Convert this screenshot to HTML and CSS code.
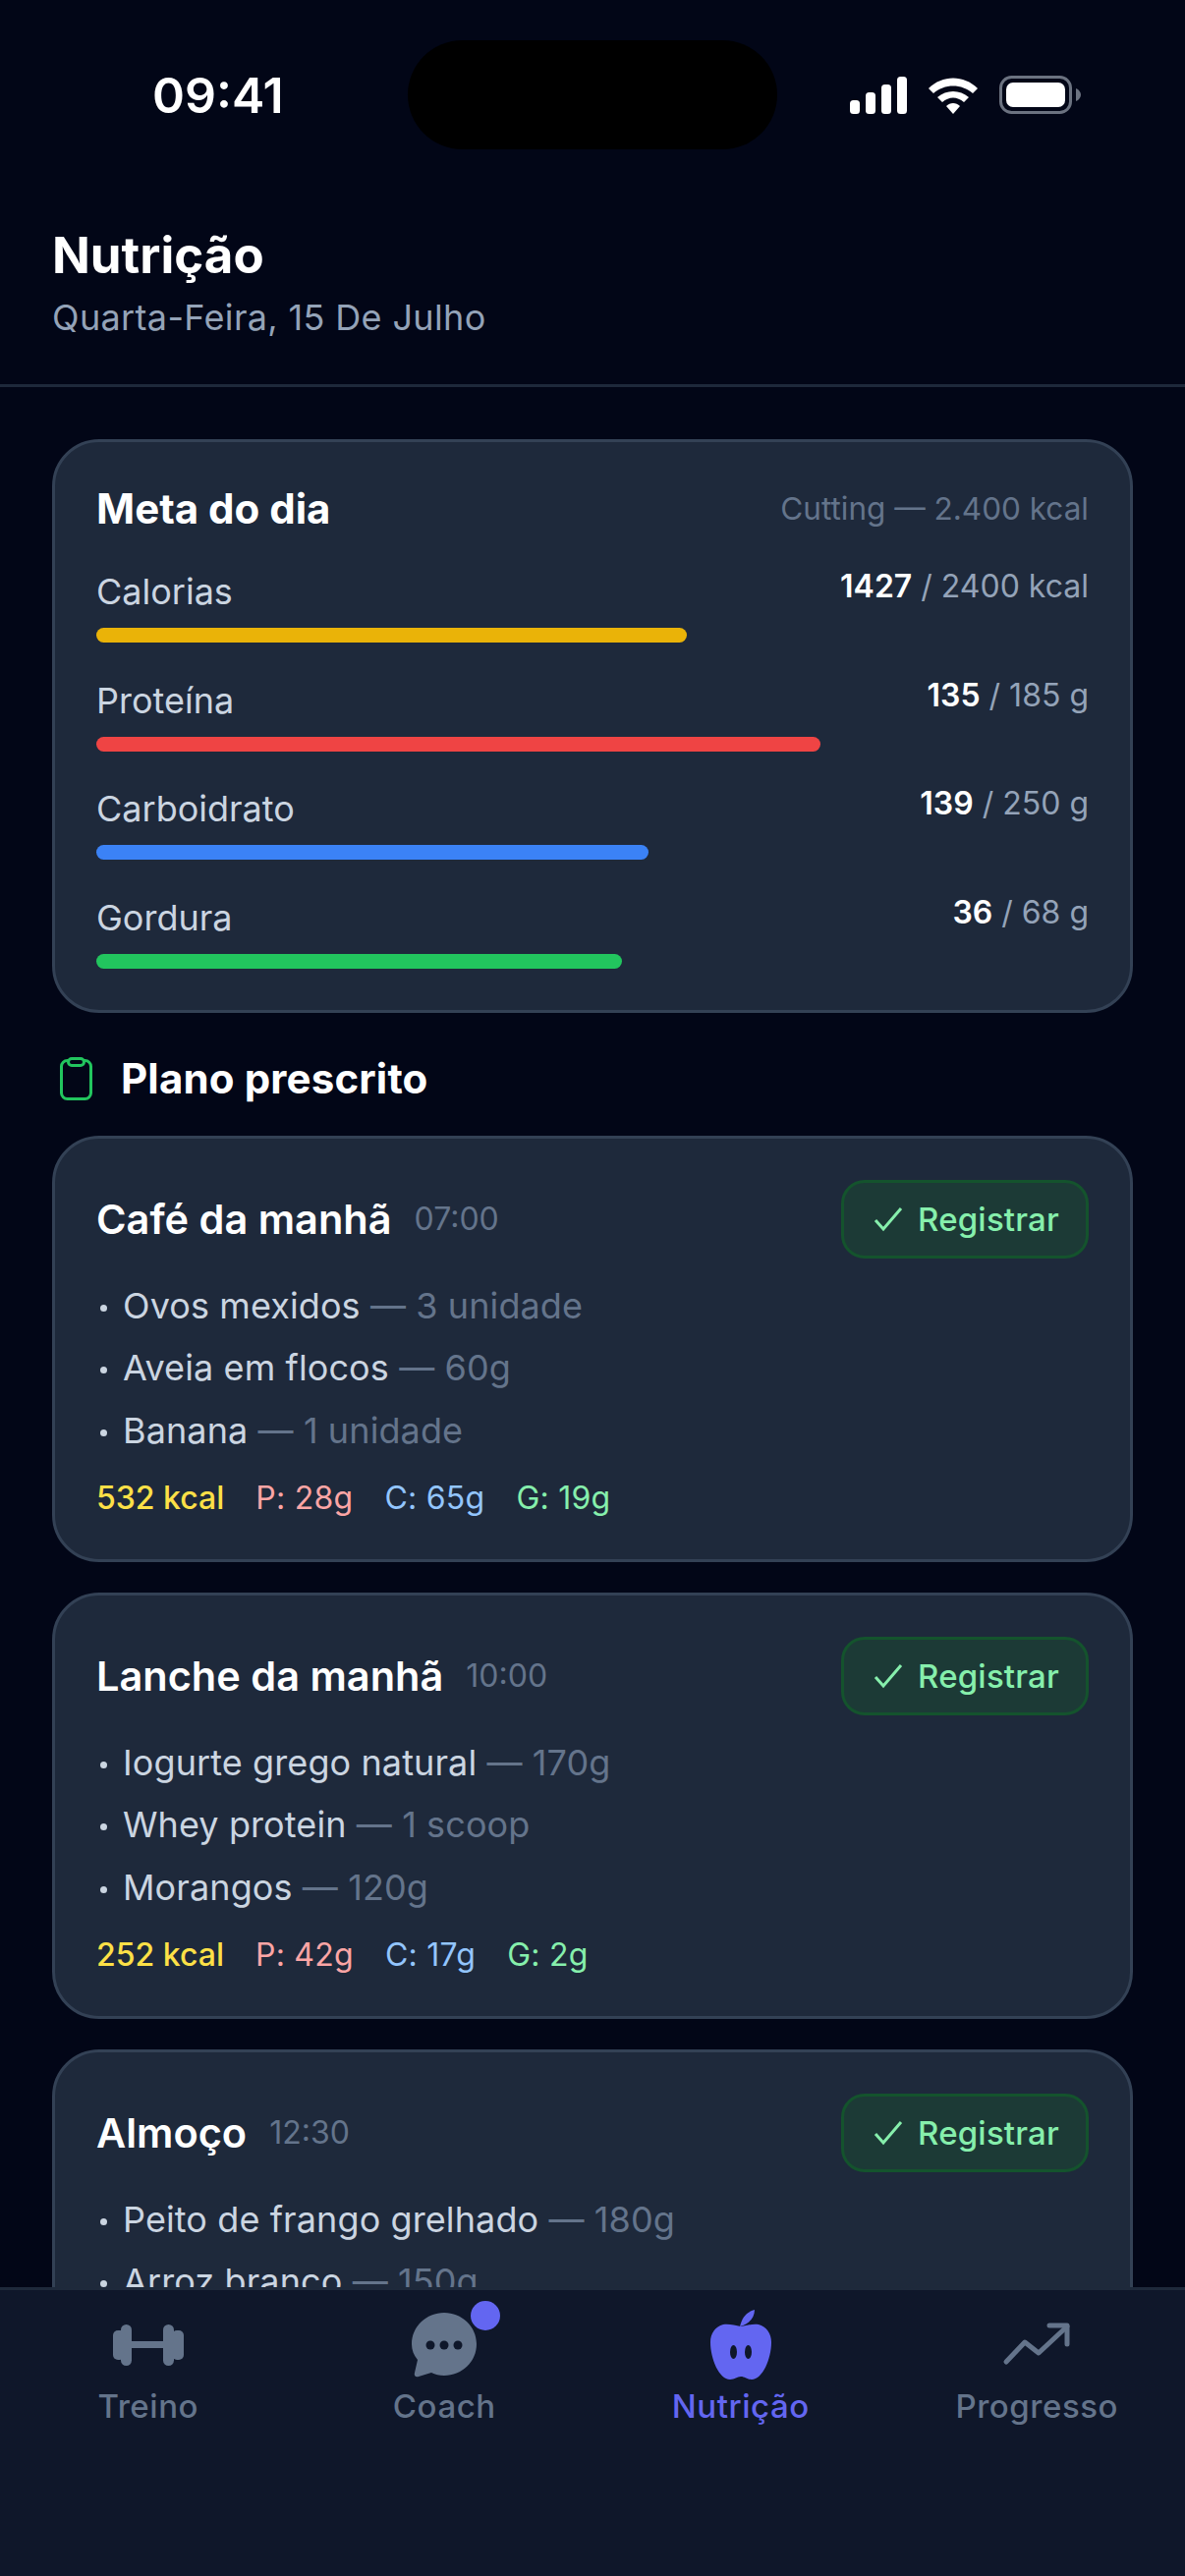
FILE: index.html
```html
<!DOCTYPE html>
<html lang="pt-BR">
<head>
    <meta charset="UTF-8">
    <meta name="viewport" content="width=device-width, initial-scale=1.0">
    <title>Nutrição</title>
    <link rel="stylesheet" href="styles.css">
</head>
<body>
    <div class="app">
        <div class="status-bar">
            <span class="status-time">09:41</span>
            <div class="island"></div>
            <svg class="status-icons" width="236" height="40" viewBox="0 0 236 40">
                <rect x="1" y="25" width="10" height="14" rx="3.5" fill="#fff"/>
                <rect x="17" y="17" width="10" height="22" rx="3.5" fill="#fff"/>
                <rect x="33" y="9" width="10" height="30" rx="3.5" fill="#fff"/>
                <rect x="49" y="1" width="10" height="38" rx="3.5" fill="#fff"/>
                <path d="M81 13 C95 -1 117 -1 131 13 L126 18 C115 8 97 8 86 18 Z" fill="#fff"/>
                <path d="M90 22 C99 14 113 14 122 22 L117 27 C110 21 102 21 95 27 Z" fill="#fff"/>
                <path d="M99 31 C103 27 109 27 113 31 L106 39 Z" fill="#fff"/>
                <rect x="154.5" y="1.5" width="71" height="36" rx="11" fill="none" stroke="#6b7280" stroke-width="3"/>
                <rect x="160" y="7" width="60" height="25" rx="7" fill="#fff"/>
                <path d="M231 13 C234 14 236 17 236 19.500 C236 22 234 25 231 26 Z" fill="#6b7280"/>
            </svg>
        </div>

        <header class="page-header">
            <h1 class="page-title">Nutrição</h1>
            <p class="page-date">Quarta-Feira, 15 De Julho</p>
        </header>

        <main class="content">
            <section class="card goal-card">
                <div class="goal-head">
                    <h2 class="goal-title">Meta do dia</h2>
                    <span class="goal-plan">Cutting — 2.400 kcal</span>
                </div>
                <div class="goal-row">
                    <div class="goal-labels"><span class="goal-name">Calorias</span><span class="goal-value"><b>1427</b> / 2400 kcal</span></div>
                    <div class="bar bar-cal" style="width: 59.46%"></div>
                </div>
                <div class="goal-row">
                    <div class="goal-labels"><span class="goal-name">Proteína</span><span class="goal-value"><b>135</b> / 185 g</span></div>
                    <div class="bar bar-prot" style="width: 72.97%"></div>
                </div>
                <div class="goal-row">
                    <div class="goal-labels"><span class="goal-name">Carboidrato</span><span class="goal-value"><b>139</b> / 250 g</span></div>
                    <div class="bar bar-carb" style="width: 55.6%"></div>
                </div>
                <div class="goal-row">
                    <div class="goal-labels"><span class="goal-name">Gordura</span><span class="goal-value"><b>36</b> / 68 g</span></div>
                    <div class="bar bar-fat" style="width: 52.94%"></div>
                </div>
            </section>

            <div class="section-head">
                <svg class="section-icon" width="36" height="46" viewBox="0 0 36 46" fill="none" stroke="#22c55e" stroke-width="3">
                    <rect x="3.500" y="4.500" width="30" height="39" rx="6"/>
                    <rect x="10.500" y="2.500" width="16" height="7" rx="3.500" fill="#020617"/>
                </svg>
                <h2 class="section-title">Plano prescrito</h2>
            </div>

            <section class="card meal-card">
                <div class="meal-head">
                    <div class="meal-name"><h3 class="meal-title">Café da manhã</h3><span class="meal-time">07:00</span></div>
                    <button class="register-btn">
                        <svg width="30" height="26" viewBox="0 0 30 26" fill="none" stroke="#86efac" stroke-width="3"><path d="M2 14 L10 23 L28 2"/></svg>
                        Registrar
                    </button>
                </div>
                <ul class="food-list">
                    <li>Ovos mexidos <span class="food-qty">— 3 unidade</span></li>
                    <li>Aveia em flocos <span class="food-qty">— 60g</span></li>
                    <li>Banana <span class="food-qty">— 1 unidade</span></li>
                </ul>
                <div class="macros">
                    <span class="macro-kcal">532 kcal</span>
                    <span class="macro-p">P: 28g</span>
                    <span class="macro-c">C: 65g</span>
                    <span class="macro-g">G: 19g</span>
                </div>
            </section>

            <section class="card meal-card">
                <div class="meal-head">
                    <div class="meal-name"><h3 class="meal-title">Lanche da manhã</h3><span class="meal-time">10:00</span></div>
                    <button class="register-btn">
                        <svg width="30" height="26" viewBox="0 0 30 26" fill="none" stroke="#86efac" stroke-width="3"><path d="M2 14 L10 23 L28 2"/></svg>
                        Registrar
                    </button>
                </div>
                <ul class="food-list">
                    <li>Iogurte grego natural <span class="food-qty">— 170g</span></li>
                    <li>Whey protein <span class="food-qty">— 1 scoop</span></li>
                    <li>Morangos <span class="food-qty">— 120g</span></li>
                </ul>
                <div class="macros">
                    <span class="macro-kcal">252 kcal</span>
                    <span class="macro-p">P: 42g</span>
                    <span class="macro-c">C: 17g</span>
                    <span class="macro-g">G: 2g</span>
                </div>
            </section>

            <section class="card meal-card">
                <div class="meal-head">
                    <div class="meal-name"><h3 class="meal-title">Almoço</h3><span class="meal-time">12:30</span></div>
                    <button class="register-btn">
                        <svg width="30" height="26" viewBox="0 0 30 26" fill="none" stroke="#86efac" stroke-width="3"><path d="M2 14 L10 23 L28 2"/></svg>
                        Registrar
                    </button>
                </div>
                <ul class="food-list">
                    <li>Peito de frango grelhado <span class="food-qty">— 180g</span></li>
                    <li>Arroz branco <span class="food-qty">— 150g</span></li>
                </ul>
            </section>
        </main>

        <nav class="tab-bar">
            <div class="tab">
                <svg class="tab-icon" width="72" height="72" viewBox="0 0 72 72" fill="#64748b">
                    <rect x="0" y="21" width="12" height="30" rx="5"/>
                    <rect x="8" y="15" width="11" height="42" rx="5.500"/>
                    <rect x="19" y="32" width="34" height="7"/>
                    <rect x="51" y="15" width="11" height="42" rx="5.500"/>
                    <rect x="60" y="21" width="12" height="30" rx="5"/>
                </svg>
                <span class="tab-label">Treino</span>
            </div>
            <div class="tab">
                <div class="tab-icon-wrap">
                    <svg class="tab-icon" width="72" height="72" viewBox="0 0 72 72">
                        <path d="M36 3 C54 3 69 17 69 35 C69 53 54 67 36 67 C31 67 27 66 23 64 L10 68 C7 69 5 67 6 64 L9 51 C5 46 3 41 3 35 C3 17 18 3 36 3 Z" fill="#64748b"/>
                        <circle cx="22" cy="36" r="4.500" fill="#0f172a"/>
                        <circle cx="36" cy="36" r="4.500" fill="#0f172a"/>
                        <circle cx="50" cy="36" r="4.500" fill="#0f172a"/>
                    </svg>
                    <span class="tab-badge"></span>
                </div>
                <span class="tab-label">Coach</span>
            </div>
            <div class="tab tab-active">
                <svg class="tab-icon" width="72" height="72" viewBox="0 0 72 72">
                    <path d="M35 17 C37 8 42 2 50 0 C50 8 44 15 35 17 Z" fill="#6366f1"/>
                    <path d="M36 17 C42 16 48 14 54 15 C62 17 67 24 67 33 C67 50 58 71 47 71 C42 71 40 68 36 68 C32 68 30 71 25 71 C14 71 5 50 5 33 C5 24 10 17 18 15 C24 14 30 16 36 17 Z" fill="#6366f1"/>
                    <ellipse cx="28.500" cy="43" rx="3.500" ry="7" fill="#0f172a"/>
                    <ellipse cx="43.500" cy="43" rx="3.500" ry="7" fill="#0f172a"/>
                </svg>
                <span class="tab-label">Nutrição</span>
            </div>
            <div class="tab">
                <svg class="tab-icon" width="72" height="72" viewBox="0 0 72 72" fill="none" stroke="#64748b" stroke-width="5" stroke-linecap="round" stroke-linejoin="round">
                    <path d="M5 53 L24 33 L38 44 L67 17"/>
                    <path d="M49 16 L67 16 L67 35"/>
                </svg>
                <span class="tab-label">Progresso</span>
            </div>
        </nav>
    </div>
</body>
</html>
```
FILE: styles.css
```css
* {
    margin: 0;
    padding: 0;
    box-sizing: border-box;
}

body {
    font-family: Inter, "Noto Sans", sans-serif;
    background: #020617;
    color: white;
}

.app {
    width: 1206px;
    height: 2622px;
    display: flex;
    flex-direction: column;
    overflow: hidden;
}

/* status bar */
.status-bar {
    height: 186px;
    flex-shrink: 0;
    position: relative;
    display: flex;
    justify-content: space-between;
    align-items: flex-start;
    padding: 76px 106px 0 155px;
}

.status-time {
    font-size: 50px;
    line-height: 42px;
    font-weight: 600;
}

.status-icons {
    margin-top: 1px;
}

.island {
    position: absolute;
    left: 415px;
    top: 41px;
    width: 376px;
    height: 111px;
    border-radius: 56px;
    background: #000;
}

/* header */
.page-header {
    flex-shrink: 0;
    height: 208px;
    padding: 44px 53px 0;
    border-bottom: 3px solid #1e293b;
}

.page-title {
    font-size: 51px;
    line-height: 60px;
    font-weight: 700;
}

.page-date {
    margin-top: 9px;
    font-size: 36px;
    line-height: 48px;
    letter-spacing: 0.350px;
    color: #94a3b8;
}

/* content */
.content {
    flex: 1;
    min-height: 0;
    overflow: hidden;
    padding: 53px 53px 0;
}

.card {
    background: #1e293b;
    border: 3px solid #334155;
    border-radius: 48px;
    padding: 42px;
}

.goal-head {
    display: flex;
    justify-content: space-between;
    align-items: center;
    height: 50px;
    margin-bottom: 38px;
}

.goal-title {
    font-size: 42px;
    font-weight: 700;
}

.goal-plan {
    font-size: 31.500px;
    color: #64748b;
}

.goal-row + .goal-row {
    margin-top: 36.500px;
}

.goal-labels {
    display: flex;
    justify-content: space-between;
    align-items: flex-start;
    margin-bottom: 15px;
    height: 44px;
}

.goal-name {
    font-size: 36px;
    line-height: 44px;
    color: #cbd5e1;
}

.goal-value {
    font-size: 32px;
    line-height: 34px;
    color: #94a3b8;
}

.goal-value b {
    color: #fff;
    font-weight: 600;
}

.bar {
    height: 15px;
    border-radius: 8px;
}

.bar-cal { background: #eab308; }
.bar-prot { background: #ef4444; }
.bar-carb { background: #3b82f6; }
.bar-fat { background: #22c55e; }

.section-head {
    display: flex;
    align-items: center;
    gap: 28px;
    height: 50px;
    margin: 42px 0 33px;
    padding-left: 6px;
}

.section-title {
    font-size: 42px;
    font-weight: 700;
    letter-spacing: 0.150px;
}

.meal-card {
    height: 434px;
    margin-bottom: 31px;
}

.meal-head {
    display: flex;
    justify-content: space-between;
    align-items: center;
    height: 80px;
}

.meal-name {
    display: flex;
    align-items: center;
    gap: 23px;
}

.meal-title {
    font-size: 41.500px;
    font-weight: 600;
}

.meal-time {
    font-size: 32px;
    color: #64748b;
}

.register-btn {
    display: flex;
    align-items: center;
    gap: 15px;
    height: 80px;
    width: 252px;
    padding-left: 30px;
    background: #1c3a36;
    border: 3px solid #14532d;
    border-radius: 24px;
    color: #86efac;
    font-family: inherit;
    font-size: 33px;
    font-weight: 500;
    letter-spacing: 0.200px;
}

.food-list {
    list-style: none;
    margin-top: 17px;
}

.food-list li {
    position: relative;
    height: 63.500px;
    line-height: 63.500px;
    padding-left: 27px;
    font-size: 36px;
    letter-spacing: 0.100px;
    color: #cbd5e1;
}

.food-list li::before {
    content: "";
    position: absolute;
    left: 4px;
    top: 30px;
    width: 7px;
    height: 7px;
    border-radius: 50%;
    background: #cbd5e1;
}

.food-qty {
    color: #64748b;
}

.macros {
    display: flex;
    gap: 32px;
    margin-top: 17px;
    font-size: 32px;
    line-height: 40px;
    letter-spacing: 0.250px;
}

.macro-kcal { color: #fde047; font-weight: 500; letter-spacing: 0; }
.macro-p { color: #fca5a5; }
.macro-c { color: #93c5fd; }
.macro-g { color: #86efac; }

/* tab bar */
.tab-bar {
    flex-shrink: 0;
    height: 294px;
    display: grid;
    grid-template-columns: repeat(4, 1fr);
    padding-top: 20px;
    background: #0f172a;
    border-top: 3px solid #1e293b;
    align-items: start;
}

.tab {
    display: flex;
    flex-direction: column;
    align-items: center;
    gap: 6px;
}

.tab-icon {
    display: block;
}

.tab-icon-wrap {
    position: relative;
}

.tab-badge {
    position: absolute;
    top: -9px;
    right: -21px;
    width: 30px;
    height: 30px;
    border-radius: 50%;
    background: #6366f1;
}

.tab-label {
    font-size: 33px;
    line-height: 40px;
    font-weight: 500;
    letter-spacing: 0.550px;
    color: #64748b;
}

.tab-active .tab-label {
    color: #6366f1;
}
```
